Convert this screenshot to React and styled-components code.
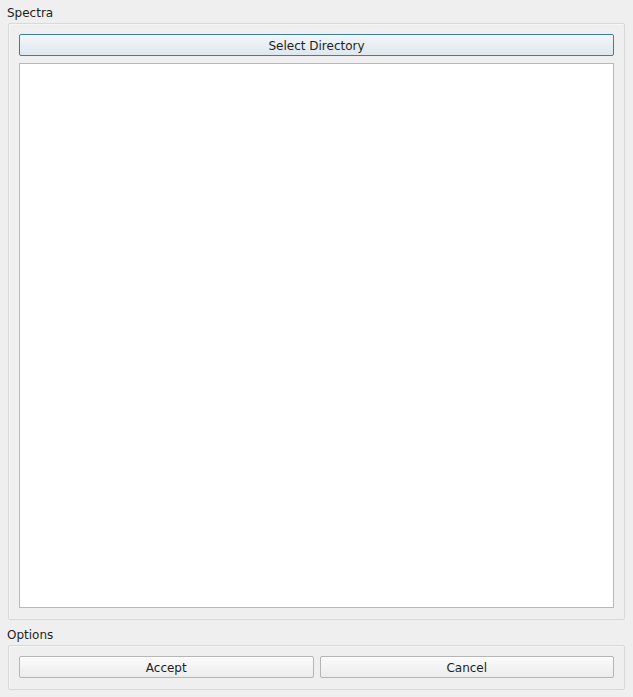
import React from 'react'
import styled, { createGlobalStyle } from 'styled-components'

const Global = createGlobalStyle`
  html, body {
    margin: 0;
    padding: 0;
    background: #efefef;
  }
  body {
    font-family: "DejaVu Sans", "Liberation Sans", sans-serif;
    font-size: 12px;
    color: #1e1e1e;
  }
`

const Page = styled.div`
  display: flex;
  flex-direction: column;
  height: 697px;
  box-sizing: border-box;
  padding: 0 8px 7px 8px;
`

const Title = styled.div`
  box-sizing: border-box;
  height: ${p => p.h}px;
  padding-top: ${p => p.top}px;
  line-height: 14px;
  margin-left: -1px;
`

const Group = styled.div`
  display: flex;
  flex-direction: column;
  gap: 7px;
  box-sizing: border-box;
  border: 1px solid #d9d9d9;
  border-radius: 2px;
  box-shadow: inset 1px 1px 0 #f6f6f6;
  padding: 10px 10px 11px 10px;
  flex: ${p => (p.grow ? 1 : 'none')};
  min-height: 0;
`

const Row = styled.div`
  display: flex;
  gap: 6px;
`

const Button = styled.button`
  flex: 1;
  height: 22px;
  margin: 0;
  padding: 2px 0 0 0;
  line-height: 14px;
  font-family: inherit;
  font-size: 12px;
  color: #1e1e1e;
  border-radius: 2px;
  border: 1px solid ${p => (p.focused ? '#3a7fa6' : '#b5b5b5')};
  background: ${p =>
    p.focused
      ? 'linear-gradient(#f2f6f9, #dfe8ee)'
      : 'linear-gradient(#fbfbfb, #ececec)'};
  box-shadow: inset 0 1px 0 rgba(255, 255, 255, 0.7);
`

const List = styled.div`
  flex: 1;
  background: #ffffff;
  border: 1px solid #b9b9b9;
`

export default function App() {
  return (
    <>
      <Global />
      <Page>
        <Title h={23} top={6}>Spectra</Title>
        <Group grow>
          <Row>
            <Button focused>Select Directory</Button>
          </Row>
          <List />
        </Group>
        <Title h={25} top={8}>Options</Title>
        <Group>
          <Row>
            <Button>Accept</Button>
            <Button>Cancel</Button>
          </Row>
        </Group>
      </Page>
    </>
  )
}
